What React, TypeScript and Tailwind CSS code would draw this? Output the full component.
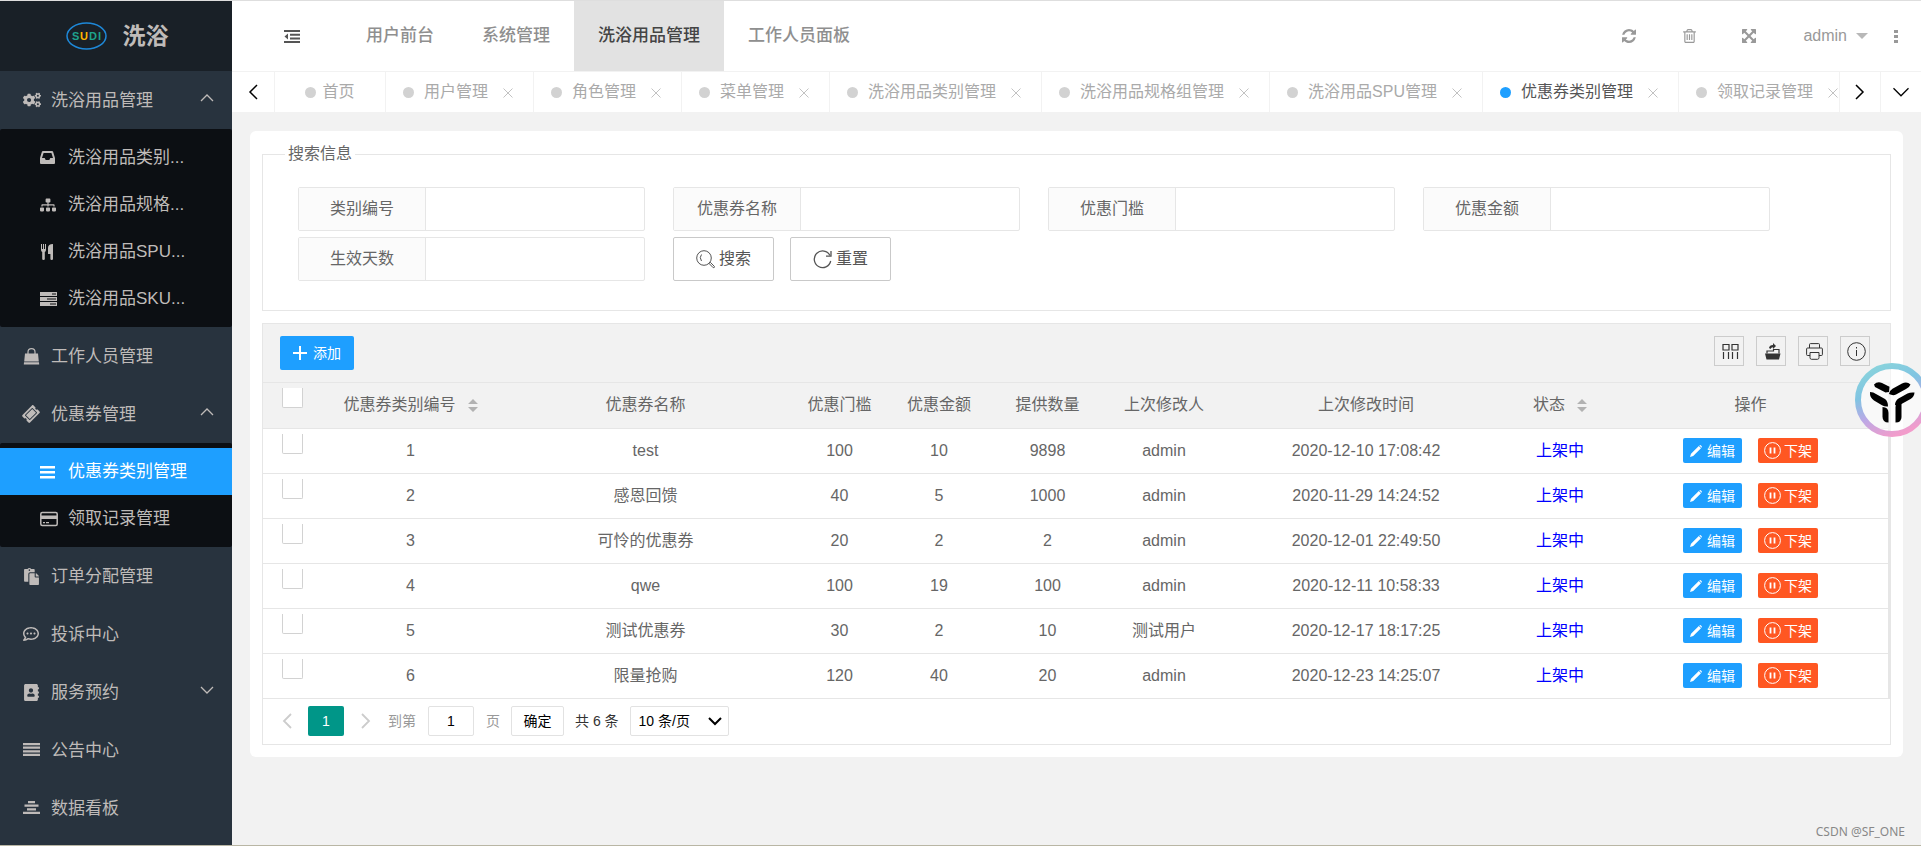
import React, { useState } from "react";
import {
  FaAddressBook,
  FaCogs,
  FaPaste,
  FaRegCommentDots,
  FaSitemap,
  FaTicketAlt,
} from "react-icons/fa";

interface MenuItem {
  title: string;
  icon: React.ReactNode;
  active?: boolean;
  open?: boolean;
  children?: MenuItem[];
}

interface Coupon {
  id: number;
  name: string;
  threshold: number;
  amount: number;
  total: number;
  editor: string;
  updatedAt: string;
}

/* Icons */
const InboxIcon = () => (
  <svg className="h-[13px] w-[15px]" viewBox="0 0 15 13" fill="currentColor" fillRule="evenodd">
    <path d="M3 0h9q.8 0 1.100.8L15 7v5q0 1-1 1H1q-1 0-1-1V7L1.900.8Q2.200 0 3 0zM3.600 2L2 7h2.700l1 2h3.600l1-2H13l-1.600-5z" />
  </svg>
);

const CutleryIcon = () => (
  <svg className="h-4 w-4" viewBox="0 0 16 16" fill="currentColor">
    <path d="M1 0h1v5h1V0h1v5h1V0h1v6q0 1.600-1.200 2.100V15q0 1-1.300 1T2.200 15V8.100Q1 7.600 1 6z" />
    <path d="M13 0v15q0 1-1.300 1t-1.300-1v-5H8V4q0-4 5-4z" />
  </svg>
);

const TasksIcon = () => (
  <svg className="h-4 w-[17px]" viewBox="0 0 17 16">
    <path fill="currentColor" d="M0 1h17v4H0zM0 6h17v4H0zM0 11h17v4H0z" />
    <path stroke="#0c0f13" d="M12 3h4M7 8h9M10 13h6" />
  </svg>
);

const BagIcon = () => (
  <svg className="h-[17px] w-[17px]" viewBox="0 0 17 17">
    <path fill="currentColor" d="M2 5.500h13l.8 8H1.200zM1 14.200h15l.2 2.300H.8z" />
    <path
      fill="none"
      stroke="currentColor"
      strokeWidth="1.200"
      d="M5 8V4q0-3.300 3.500-3.300T12 4v4"
    />
  </svg>
);

const BarsIcon = () => (
  <svg className="h-4 w-4" viewBox="0 0 16 16" fill="currentColor">
    <path d="M0 2h15v2.500H0zM0 7h15v2.500H0zM0 12h15v2.500H0z" />
  </svg>
);

const CardIcon = () => (
  <svg className="h-4 w-[18px]" viewBox="0 0 18 16">
    <rect x=".8" y="1.500" width="16.400" height="13" rx="1.500" fill="none" stroke="currentColor" strokeWidth="1.500" />
    <path fill="currentColor" d="M1 4.500h16V8H1zM3 11h2v1.200H3zM6 11h3v1.200H6z" />
  </svg>
);

const JustifyIcon = () => (
  <svg className="h-4 w-[17px]" viewBox="0 0 17 16" fill="currentColor">
    <path d="M0 1h17v2.200H0zM0 4.600h17v2.200H0zM0 8.200h17v2.200H0zM0 11.800h17V14H0z" />
  </svg>
);

const CenterIcon = () => (
  <svg className="h-4 w-[17px]" viewBox="0 0 17 16" fill="currentColor">
    <path d="M5 1h7v2.200H5zM1.500 4.600h14v2.200h-14zM4 8.200h9v2.200H4zM0 11.800h17V14H0z" />
  </svg>
);

const OutdentIcon = () => (
  <svg className="h-[13px] w-4" viewBox="0 0 16 13" fill="currentColor">
    <path d="M0 0h16v2H0zM6 3.700h10v2H6zM6 7.400h10v2H6zM0 11h16v2H0zM4 3.500v6L.5 6.500z" />
  </svg>
);

const RefreshIcon = () => (
  <svg className="h-[14px] w-[14px]" viewBox="0 0 1536 1536" fill="currentColor">
    <path d="M1511 928q0 5-1 7-64 268-268 434.500T764 1536q-146 0-282.500-55T238 1324l-129 129q-19 19-45 19t-45-19-19-45V960q0-26 19-45t45-19h448q26 0 45 19t19 45-19 45l-137 137q71 66 161 102t187 36q134 0 250-65t186-179q11-17 53-117 8-23 30-23h192q13 0 22.500 9.500t9.500 22.500zm25-800v448q0 26-19 45t-45 19h-448q-26 0-45-19t-19-45 19-45l138-138Q969 256 768 256q-134 0-250 65T332 500q-11 17-53 117-8 23-30 23H50q-13 0-22.500-9.500T18 608v-7q65-268 270-434.500T768 0q146 0 284 55.500T1297 212l130-129q19-19 45-19t45 19 19 45z" />
  </svg>
);

const TrashIcon = () => (
  <svg className="h-[14px] w-[13px]" viewBox="0 0 1408 1536" fill="currentColor">
    <path d="M512 608v576q0 14-9 23t-23 9h-64q-14 0-23-9t-9-23V608q0-14 9-23t23-9h64q14 0 23 9t9 23zm256 0v576q0 14-9 23t-23 9h-64q-14 0-23-9t-9-23V608q0-14 9-23t23-9h64q14 0 23 9t9 23zm256 0v576q0 14-9 23t-23 9h-64q-14 0-23-9t-9-23V608q0-14 9-23t23-9h64q14 0 23 9t9 23zm128 724V384H256v948q0 22 7 40.500t14.500 27 10.500 8.500h832q3 0 10.500-8.500t14.500-27 7-40.500zM480 256h448l-48-117q-7-9-17-11H546q-10 2-17 11zm928 32v64q0 14-9 23t-23 9h-96v948q0 83-47 143.500t-113 60.500H288q-66 0-113-58.500T128 1336V384H32q-14 0-23-9t-9-23v-64q0-14 9-23t23-9h309l70-167q15-37 54-63t79-26h320q40 0 79 26t54 63l70 167h309q14 0 23 9t9 23z" />
  </svg>
);

const FullscreenIcon = () => (
  <svg className="h-[14px] w-[14px]" viewBox="0 0 1536 1536" fill="currentColor">
    <path d="M1283 413L928 768l355 355 144-144q29-31 70-14 39 17 39 59v448q0 26-19 45t-45 19h-448q-42 0-59-40-17-39 14-69l144-144-355-355-355 355 144 144q31 30 14 69-17 40-59 40H64q-26 0-45-19t-19-45v-448q0-42 40-59 39-17 69 14l144 144 355-355-355-355-144 144q-19 19-45 19-12 0-24-5-40-17-40-59V64q0-26 19-45T64 0h448q42 0 59 40 17 39-14 69L413 253l355 355 355-355-144-144q-31-30-14-69 17-40 59-40h448q26 0 45 19t19 45v448q0 42-39 59-13 5-25 5-26 0-45-19z" />
  </svg>
);

const MoreIcon = () => (
  <svg className="h-[13px] w-1" viewBox="0 0 4 13" fill="currentColor">
    <path d="M0 0h4v3H0zM0 5h4v3H0zM0 10h4v3H0z" />
  </svg>
);

const Chevron = ({ d, className }: { d: string; className: string }) => (
  <svg className={className} viewBox="0 0 16 16" fill="none" stroke="currentColor">
    <path d={d} />
  </svg>
);

const UP = "M2 11l6-6 6 6";
const DOWN = "M2 5l6 6 6-6";
const LEFT = "M12 1L5 8l7 7";
const RIGHT = "M4 1l7 7-7 7";

const CloseIcon = () => (
  <svg className="h-[10px] w-[10px]" viewBox="0 0 10 10" stroke="currentColor">
    <path d="M.5.500l9 9M9.500.500l-9 9" />
  </svg>
);

const SearchIcon = () => (
  <svg className="h-[19px] w-[19px]" viewBox="0 0 19 19" fill="none" stroke="currentColor">
    <circle cx="8" cy="8" r="7.300" />
    <path d="M5.500 11Q3 7.500 5.500 4.500M13.200 13.600l1.200-1.200 4 4q.3 1.500-1.200 1.300z" />
  </svg>
);

const ResetIcon = () => (
  <svg className="h-[19px] w-[19px]" viewBox="0 0 19 19" fill="none" stroke="currentColor" strokeWidth="1.300">
    <path d="M17 5.500A8.300 8.300 0 1 0 17.700 11" />
    <path d="M18 1v5.200h-5" />
  </svg>
);

const SortIcon = () => (
  <svg className="h-[13px] w-[10px]" viewBox="0 0 10 13" fill="#b2b2b2">
    <path d="M5 0l5 5H0zM5 13l5-5H0z" />
  </svg>
);

const PencilIcon = () => (
  <svg className="h-3 w-3" viewBox="0 0 12 12" fill="currentColor">
    <path d="M0 12l1-3.200L8.800 1 11 3.200 3.200 11zM9.300.500q.8-.8 1.700 0l.5.500q.8.800 0 1.700z" />
  </svg>
);

const PauseIcon = () => (
  <svg className="h-[17px] w-[17px]" viewBox="0 0 17 17" fill="none" stroke="currentColor">
    <circle cx="8.500" cy="8.500" r="7.900" />
    <path strokeWidth="1.800" d="M6.500 5.500v6M10.500 5.500v6" />
  </svg>
);

const toolIcons = [
  {
    label: "筛选列",
    icon: (
      <svg className="ml-[2px] h-[17px] w-[17px]" viewBox="0 0 17 17" fill="none" stroke="currentColor">
        <path strokeWidth="1.200" d="M1 1.500h6v5.500H1zM10 1.500h6v5.500h-6zM1.500 9v7M6.500 9v7M10.500 9v7M15.500 9v7" />
      </svg>
    ),
  },
  {
    label: "导出",
    icon: (
      <svg className="ml-[2px] h-[17px] w-[17px]" viewBox="0 0 17 17">
        <path fill="currentColor" d="M1 10.500h15.500L15 16.500H2.500zM5 5q.5-3 4-3V0l3 3-3 3V4.200Q7 4.200 6.500 6z" />
        <path fill="none" stroke="currentColor" strokeWidth="1.200" d="M3 10.500V8h6.500V6.500h5.500v4" />
      </svg>
    ),
  },
  {
    label: "打印",
    icon: (
      <svg className="ml-[2px] h-[17px] w-[17px]" viewBox="0 0 17 17" fill="none" stroke="currentColor">
        <path d="M3.500 5V1.500Q3.500.6 4.500.6h8q1 0 1 .9V5M4 12.500H1.500Q.6 12.500.6 11.500V6Q.6 5 1.600 5h13.800q1 0 1 1v5.500q0 1-1 1H13" />
        <path d="M4 9.500h9v5q0 1.800-1.500 1.800h-6Q4 16.300 4 14.500z" />
      </svg>
    ),
  },
  {
    label: "提示",
    icon: (
      <svg className="ml-[2px] h-[19px] w-[19px]" viewBox="0 0 19 19" fill="none" stroke="currentColor">
        <circle cx="9.500" cy="9.500" r="8.800" />
        <path d="M9.500 8v6M9.500 5v1.500" />
      </svg>
    ),
  },
];

const menu: MenuItem[] = [
  {
    title: "洗浴用品管理",
    icon: <FaCogs size={18} />,
    open: true,
    children: [
      { title: "洗浴用品类别...", icon: <InboxIcon /> },
      { title: "洗浴用品规格...", icon: <FaSitemap size={16} /> },
      { title: "洗浴用品SPU...", icon: <CutleryIcon /> },
      { title: "洗浴用品SKU...", icon: <TasksIcon /> },
    ],
  },
  { title: "工作人员管理", icon: <BagIcon /> },
  {
    title: "优惠券管理",
    icon: <FaTicketAlt size={16} className="-rotate-45" />,
    open: true,
    children: [
      { title: "优惠券类别管理", icon: <BarsIcon />, active: true },
      { title: "领取记录管理", icon: <CardIcon /> },
    ],
  },
  { title: "订单分配管理", icon: <FaPaste size={17} /> },
  { title: "投诉中心", icon: <FaRegCommentDots size={16} /> },
  { title: "服务预约", icon: <FaAddressBook size={17} />, open: false },
  { title: "公告中心", icon: <JustifyIcon /> },
  { title: "数据看板", icon: <CenterIcon /> },
];

const topNav = ["用户前台", "系统管理", "洗浴用品管理", "工作人员面板"];

const tabs = [
  "用户管理",
  "角色管理",
  "菜单管理",
  "洗浴用品类别管理",
  "洗浴用品规格组管理",
  "洗浴用品SPU管理",
  "优惠券类别管理",
  "领取记录管理",
];

const searchFields = ["类别编号", "优惠券名称", "优惠门槛", "优惠金额", "生效天数"];

const coupons: Coupon[] = [
  { id: 1, name: "test", threshold: 100, amount: 10, total: 9898, editor: "admin", updatedAt: "2020-12-10 17:08:42" },
  { id: 2, name: "感恩回馈", threshold: 40, amount: 5, total: 1000, editor: "admin", updatedAt: "2020-11-29 14:24:52" },
  { id: 3, name: "可怜的优惠券", threshold: 20, amount: 2, total: 2, editor: "admin", updatedAt: "2020-12-01 22:49:50" },
  { id: 4, name: "qwe", threshold: 100, amount: 19, total: 100, editor: "admin", updatedAt: "2020-12-11 10:58:33" },
  { id: 5, name: "测试优惠券", threshold: 30, amount: 2, total: 10, editor: "测试用户", updatedAt: "2020-12-17 18:17:25" },
  { id: 6, name: "限量抢购", threshold: 120, amount: 40, total: 20, editor: "admin", updatedAt: "2020-12-23 14:25:07" },
];

const checkboxClass =
  "block h-5 w-[21px] appearance-none rounded-b-xs border border-t-0 border-[#d2d2d2] bg-white checked:bg-[#1e9fff]";

const Sidebar: React.FC = () => (
  <aside className="w-[232px] shrink-0 bg-[#28333e] text-[17px] text-[#bfbbb9]">
    <div className="flex h-[70px] items-center justify-center gap-4 bg-[#192027] pr-10 pl-[42px]">
      <svg className="h-7 w-[41px]" viewBox="0 0 41 28">
        <ellipse cx="20.500" cy="14" rx="19.500" ry="13" fill="none" stroke="#1e88d8" strokeWidth="1.500" />
        <g fontFamily="Liberation Sans, sans-serif" fontSize="11" fontWeight="bold">
          <text x="6" y="18" fill="#1fa28c">S</text>
          <text x="14" y="18" fill="#ffb800">U</text>
          <text x="23" y="18" fill="#1fa28c">D</text>
          <text x="32" y="18" fill="#1fa28c">I</text>
        </g>
      </svg>
      <h1 className="text-[23px] leading-7 font-bold">洗浴</h1>
    </div>
    <nav>
      {menu.map((item) => (
        <div key={item.title}>
          <a href="#" className="flex h-[58px] items-center pr-[17px] pl-[23px]">
            <span className="w-7">{item.icon}</span>
            <span className="flex-1 pt-[2px]">{item.title}</span>
            {item.open !== undefined && (
              <Chevron d={item.open ? UP : DOWN} className="mb-1 h-4 w-4 stroke-[1.3]" />
            )}
          </a>
          {item.children && (
            <div className="rounded-xs bg-[#0c0f13] py-[5px]">
              {item.children.map((child) => (
                <a
                  href="#"
                  key={child.title}
                  className={`flex h-[47px] items-center pl-10 ${
                    child.active ? "bg-[#1e9fff] text-white" : ""
                  }`}
                >
                  <span className="w-7">{child.icon}</span>
                  <span>{child.title}</span>
                </a>
              ))}
            </div>
          )}
        </div>
      ))}
    </nav>
  </aside>
);

const Header: React.FC = () => (
  <header className="flex h-[70px] bg-white text-[17px] text-[#8f8f8f]">
    <button aria-label="收起菜单" className="mr-[42px] ml-[52px] text-[#555]">
      <OutdentIcon />
    </button>
    <nav className="flex font-medium">
      {topNav.map((name) => (
        <a
          href="#"
          key={name}
          className={`flex items-center px-6 ${
            name === "洗浴用品管理" ? "bg-[#e2e2e2] text-[#444]" : ""
          }`}
        >
          {name}
        </a>
      ))}
    </nav>
    <div className="ml-auto flex items-center text-base text-[#999]">
      <button aria-label="刷新" className="flex w-[60px] justify-center">
        <RefreshIcon />
      </button>
      <button aria-label="清理" className="flex w-[60px] justify-center">
        <TrashIcon />
      </button>
      <button aria-label="全屏" className="flex w-[60px] justify-center">
        <FullscreenIcon />
      </button>
      <button className="flex items-center gap-[9px] pl-6">
        admin
        <svg className="h-[6px] w-3" viewBox="0 0 12 6" fill="#b8b8b8">
          <path d="M0 0h12L6 6z" />
        </svg>
      </button>
      <button aria-label="更多" className="mr-[23px] ml-[26px]">
        <MoreIcon />
      </button>
    </div>
  </header>
);

const TabBar: React.FC = () => (
  <div className="flex h-[41px] border-t border-[#f2f2f2] bg-white text-base text-[#aaa]">
    <button aria-label="向左" className="flex w-[43px] shrink-0 items-center justify-center border-r border-[#f2f2f2] text-black">
      <Chevron d={LEFT} className="h-4 w-4 stroke-[1.5]" />
    </button>
    <div className="flex min-w-0 flex-1 overflow-hidden">
      <a href="#" className="flex w-[111px] shrink-0 items-center justify-center gap-[6px] border-r border-[#f2f2f2]">
        <span className="h-[11px] w-[11px] rounded-full bg-[#d2d2d2]" />
        首页
      </a>
      {tabs.map((name) => {
        const active = name === "优惠券类别管理";
        return (
          <div key={name} className="flex shrink-0 items-center border-r border-[#f2f2f2] pr-5 pl-[17px]">
            <span className={`mr-[10px] h-[11px] w-[11px] rounded-full ${active ? "bg-[#1e9fff]" : "bg-[#d2d2d2]"}`} />
            <a href="#" className={active ? "text-[#555]" : ""}>
              {name}
            </a>
            <button aria-label={`关闭${name}`} className="ml-[15px] pt-[2px] text-[#c2c2c2]">
              <CloseIcon />
            </button>
          </div>
        );
      })}
    </div>
    <button aria-label="向右" className="flex w-[41px] shrink-0 items-center justify-center border-l border-[#f2f2f2] text-black">
      <Chevron d={RIGHT} className="h-4 w-4 stroke-[1.5]" />
    </button>
    <button aria-label="标签操作" className="flex w-[41px] shrink-0 items-center justify-center border-l border-[#f2f2f2] text-black">
      <Chevron d={DOWN} className="h-5 w-5" />
    </button>
  </div>
);

const SearchForm: React.FC = () => (
  <form className="text-base text-[#666]">
    <fieldset className="h-[169px] border border-[#e6e6e6] pl-[35px]">
      <legend className="-ml-[13px] px-[3px] leading-6">搜索信息</legend>
      <div className="mt-[21px] flex flex-wrap gap-x-7 gap-y-[6px]">
        {searchFields.map((label, idx) => (
          <div key={label} className="flex h-11 w-[347px] rounded-xs border border-[#e6e6e6]">
            <label
              htmlFor={`field-${idx}`}
              className="flex w-[127px] items-center justify-center border-r border-[#e6e6e6] bg-[#fbfbfb]"
            >
              {label}
            </label>
            <input id={`field-${idx}`} type="text" className="min-w-0 flex-1 px-3 outline-none" />
          </div>
        ))}
        <div className="flex gap-4 text-[#555]">
          <button type="button" className="flex h-11 w-[101px] items-center justify-center gap-1 rounded-xs border border-[#c9c9c9]">
            <SearchIcon />
            搜索
          </button>
          <button type="reset" className="flex h-11 w-[101px] items-center justify-center gap-1 rounded-xs border border-[#c9c9c9]">
            <ResetIcon />
            重置
          </button>
        </div>
      </div>
    </fieldset>
  </form>
);

const Pagination: React.FC = () => {
  const [page, setPage] = useState("1");

  return (
    <div className="flex h-[45px] items-center pl-4 text-sm text-[#999]">
      <button aria-label="上一页" className="mr-[13px] text-[#ccc]">
        <Chevron d={LEFT} className="h-4 w-4 stroke-[1.8]" />
      </button>
      <button className="h-[30px] w-9 rounded-xs bg-[#009688] text-white">1</button>
      <button aria-label="下一页" className="mr-[14px] ml-[14px] text-[#ccc]">
        <Chevron d={RIGHT} className="h-4 w-4 stroke-[1.8]" />
      </button>
      <label htmlFor="page-no">到第</label>
      <input
        id="page-no"
        value={page}
        onChange={(e) => setPage(e.target.value)}
        className="mx-3 h-[30px] w-[46px] rounded-xs border border-[#e2e2e2] text-center text-black"
      />
      <span>页</span>
      <button className="mx-[11px] h-[30px] w-[53px] rounded-xs border border-[#e2e2e2] text-black">
        确定
      </button>
      <span className="text-[#333]">共 6 条</span>
      <div className="relative ml-[11px]">
        <select
          aria-label="每页条数"
          className="h-[30px] w-[99px] appearance-none rounded-xs border border-[#e2e2e2] pl-2 text-black"
        >
          <option>10 条/页</option>
          <option>20 条/页</option>
        </select>
        <Chevron d={DOWN} className="pointer-events-none absolute top-[7px] right-[6px] h-4 w-4 stroke-2 text-black" />
      </div>
    </div>
  );
};

const CouponTable: React.FC = () => (
  <section className="mt-3 border border-[#e6e6e6] text-base text-[#666]">
    <div className="flex h-[59px] justify-between border-b border-[#e6e6e6] bg-[#f2f2f2] px-[17px] pt-3">
      <button className="flex h-[34px] w-[74px] items-center justify-center gap-[6px] rounded-xs bg-[#1e9fff] text-sm text-white">
        <svg className="h-[14px] w-[14px]" viewBox="0 0 14 14" stroke="currentColor" strokeWidth="2">
          <path d="M7 0v14M0 7h14" />
        </svg>
        添加
      </button>
      <div className="flex gap-3 pr-[3px] text-[#333]">
        {toolIcons.map((tool) => (
          <button
            key={tool.label}
            aria-label={tool.label}
            className="flex h-[30px] w-[30px] items-center justify-center border border-[#ccc]"
          >
            {tool.icon}
          </button>
        ))}
      </div>
    </div>

    <table className="w-full table-fixed border-r-2 border-[#e6e6e6] text-center">
      <colgroup>
        <col className="w-[60px]" />
        <col className="w-[175px]" />
        <col />
        <col className="w-[93px]" />
        <col className="w-[106px]" />
        <col className="w-[111px]" />
        <col className="w-[122px]" />
        <col className="w-[282px]" />
        <col className="w-[106px]" />
        <col className="w-[276px]" />
      </colgroup>
      <thead className="bg-[#f2f2f2]">
        <tr className="h-[45px] border-b border-[#e6e6e6]">
          <th className="pt-[5px] pl-[19px] align-top">
            <input type="checkbox" aria-label="全选" className={checkboxClass} />
          </th>
          <th className="font-normal">
            <span className="flex items-center justify-center gap-3">
              优惠券类别编号
              <SortIcon />
            </span>
          </th>
          <th className="font-normal">优惠券名称</th>
          <th className="font-normal">优惠门槛</th>
          <th className="font-normal">优惠金额</th>
          <th className="font-normal">提供数量</th>
          <th className="font-normal">上次修改人</th>
          <th className="font-normal">上次修改时间</th>
          <th className="font-normal">
            <span className="flex items-center justify-center gap-3">
              状态
              <SortIcon />
            </span>
          </th>
          <th className="font-normal">操作</th>
        </tr>
      </thead>
      <tbody>
        {coupons.map((coupon) => (
          <tr key={coupon.id} className="h-[45px] border-b border-[#e6e6e6]">
            <td className="pt-[5px] pl-[19px] align-top">
              <input type="checkbox" aria-label={`选择 ${coupon.id}`} className={checkboxClass} />
            </td>
            <td>{coupon.id}</td>
            <td>{coupon.name}</td>
            <td>{coupon.threshold}</td>
            <td>{coupon.amount}</td>
            <td>{coupon.total}</td>
            <td>{coupon.editor}</td>
            <td>{coupon.updatedAt}</td>
            <td className="text-[#0000ff]">上架中</td>
            <td>
              <div className="flex justify-center gap-4 text-sm text-white">
                <button className="flex h-[25px] w-[59px] items-center justify-center gap-[5px] rounded-xs bg-[#1e9fff]">
                  <PencilIcon />
                  编辑
                </button>
                <button className="flex h-[25px] w-[60px] items-center justify-center gap-[3px] rounded-xs bg-[#ff5722]">
                  <PauseIcon />
                  下架
                </button>
              </div>
            </td>
          </tr>
        ))}
      </tbody>
    </table>
    <Pagination />
  </section>
);

const FloatingBadge = () => (
  <button aria-label="助手" className="absolute top-[362px] -right-2 h-[74px] w-[74px]">
    <svg viewBox="0 0 74 74">
      <defs>
        <linearGradient id="ring" x1="0.2" y1="0" x2="0.6" y2="1">
          <stop offset="0" stopColor="#8ad4dc" />
          <stop offset="0.350" stopColor="#80c4e2" />
          <stop offset="0.650" stopColor="#bba9e6" />
          <stop offset="1" stopColor="#f29ccb" />
        </linearGradient>
      </defs>
      <circle cx="37" cy="37" r="34" fill="#ffffff" fillOpacity="0.500" stroke="url(#ring)" strokeWidth="6" />
      <g fill="#000">
        <path d="M19 21.500q3.500-3.500 8-1.500l7.500 3.700-.5 5.300-3.500.5L20 24z" />
        <path d="M34 31q.5-3.500 3.500-5.200L47 20.500q5-2.500 8.500 1-1 3-4.500 4.500l-10 5.500q-3 1.500-7-.5z" />
        <path d="M15 29q3.500.2 6 2l9 5q3 2 3 7.500-3 .5-6-1.200l-8-4.800Q14.500 34.500 15 29z" />
        <path d="M40 42q0-4 3.500-6.500l9-5q3-1.500 7-1-.2 4-4 6.500l-9 5q-3 1.800-6.500 1z" />
        <path d="M27.500 44q6 0 6 6v9.500q-6 0-6-6z" />
        <path d="M40.500 59.500V44q0-5 6-6v16q0 5.500-6 5.500z" />
      </g>
    </svg>
  </button>
);

const App: React.FC = () => {
  return (
    <div className="relative flex min-h-screen overflow-hidden border-t border-b border-t-[#dedede] border-b-[#b9b6a4] bg-[#f2f2f2] font-['Liberation_Sans','Noto_Sans_CJK_SC',sans-serif]">
      <Sidebar />
      <div className="min-w-0 flex-1">
        <Header />
        <TabBar />
        <main className="mx-[18px] mt-[19px] rounded-md bg-white px-3 pt-[11px] pb-3">
          <SearchForm />
          <CouponTable />
        </main>
      </div>
      <FloatingBadge />
      <span className="absolute right-4 bottom-[5px] font-['Noto_Sans',sans-serif] text-xs text-[#888]">
        CSDN @SF_ONE
      </span>
    </div>
  );
};

export default App;
